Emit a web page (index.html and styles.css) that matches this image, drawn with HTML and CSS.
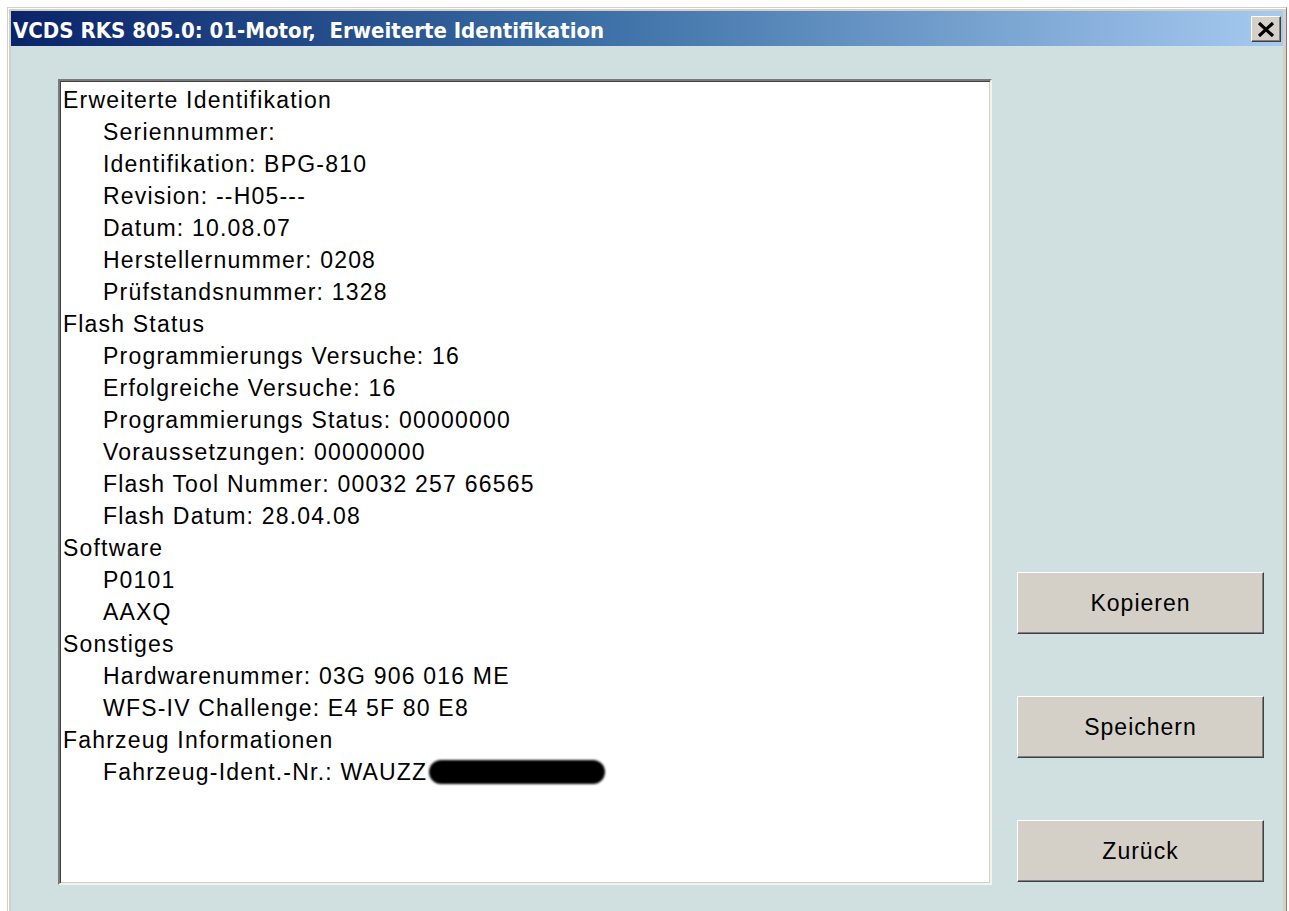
FILE: index.html
```html
<!DOCTYPE html>
<html lang="de">
<head>
<meta charset="utf-8">
<title>VCDS RKS 805.0: 01-Motor, Erweiterte Identifikation</title>
<link rel="stylesheet" href="styles.css">
</head>
<body>
<div class="window">
  <div class="titlebar">
    <span class="title">VCDS RKS 805.0: 01-Motor,&nbsp; Erweiterte Identifikation</span>
    <button class="close" type="button" aria-label="Schließen">
      <svg width="18" height="15" viewBox="0 0 18 15">
        <path d="M2 1 L16 14 M16 1 L2 14" stroke="#000" stroke-width="3.2" fill="none"/>
      </svg>
    </button>
  </div>
  <div class="client">
    <div class="listbox">
      <div class="group">Erweiterte Identifikation</div>
      <div class="item">Seriennummer:</div>
      <div class="item">Identifikation: BPG-810</div>
      <div class="item">Revision: --H05---</div>
      <div class="item">Datum: 10.08.07</div>
      <div class="item">Herstellernummer: 0208</div>
      <div class="item">Prüfstandsnummer: 1328</div>
      <div class="group">Flash Status</div>
      <div class="item">Programmierungs Versuche: 16</div>
      <div class="item">Erfolgreiche Versuche: 16</div>
      <div class="item">Programmierungs Status: 00000000</div>
      <div class="item">Voraussetzungen: 00000000</div>
      <div class="item">Flash Tool Nummer: 00032 257 66565</div>
      <div class="item">Flash Datum: 28.04.08</div>
      <div class="group">Software</div>
      <div class="item">P0101</div>
      <div class="item">AAXQ</div>
      <div class="group">Sonstiges</div>
      <div class="item">Hardwarenummer: 03G 906 016 ME</div>
      <div class="item">WFS-IV Challenge: E4 5F 80 E8</div>
      <div class="group">Fahrzeug Informationen</div>
      <div class="item">Fahrzeug-Ident.-Nr.: WAUZZ<span class="redacted"></span></div>
    </div>
    <div class="actions">
      <button class="btn" type="button">Kopieren</button>
      <button class="btn" type="button">Speichern</button>
      <button class="btn" type="button">Zurück</button>
    </div>
  </div>
</div>
</body>
</html>
```
FILE: styles.css
```css
html, body {
  margin: 0;
  padding: 0;
  background: #ffffff;
}

body {
  padding: 7px 0 0 7px;
  font-family: "Liberation Sans", Arial, sans-serif;
}

/* dialog frame */
.window {
  width: 1272px;
  height: 920px;
  border-top: 1px solid #d4d0c8;
  border-left: 1px solid #d4d0c8;
  border-right: 1px solid #808080;
  padding: 3px;
  background: #d4d0c8;
  box-shadow: inset 1px 1px 0 #ffffff;
  display: flex;
  flex-direction: column;
}

.titlebar {
  height: 35px;
  flex: none;
  box-sizing: border-box;
  display: flex;
  align-items: center;
  justify-content: space-between;
  padding: 1px 2px 0 2px;
  background: linear-gradient(to right, #0a246a 0%, #3a6ea5 45%, #a6caf0 100%);
}

.title {
  color: #ffffff;
  font-family: "DejaVu Sans Condensed", "DejaVu Sans", sans-serif;
  font-weight: bold;
  font-size: 22px;
  line-height: 26px;
  padding-top: 3px;
  white-space: nowrap;
}

.close {
  width: 30px;
  height: 26px;
  padding: 0;
  margin: 0;
  display: flex;
  align-items: center;
  justify-content: center;
  background: #d4d0c8;
  border: 1px solid;
  border-color: #ffffff #404040 #404040 #ffffff;
  box-shadow: inset -1px -1px 0 #808080;
}

.client {
  flex: 1;
  background: #d0dfe0;
  display: flex;
  align-items: flex-start;
  padding: 33px 19px 0 47px;
}

/* sunken list of identification values */
.listbox {
  width: 934px;
  height: 806px;
  flex: none;
  box-sizing: border-box;
  background: #ffffff;
  border: 2px solid;
  border-color: #7a7a7a #f4f2ee #f4f2ee #7a7a7a;
  box-shadow: inset 1px 1px 0 #404040, inset -1px -1px 0 #d4d0c8;
  padding: 3px 0 0 3px;
  font-size: 23px;
  line-height: 32px;
  color: #000000;
  letter-spacing: 1.2px;
}

.item {
  padding-left: 40px;
  white-space: nowrap;
}

.group {
  white-space: nowrap;
}

.redacted {
  display: inline-block;
  vertical-align: middle;
  width: 176px;
  height: 24px;
  margin-left: 2px;
  margin-top: -4px;
  background: #000000;
  border-radius: 12px;
  filter: blur(1px);
}

.actions {
  margin-left: 25px;
  width: 247px;
  height: 803px;
  display: flex;
  flex-direction: column;
  justify-content: flex-end;
  gap: 62px;
}

.btn {
  height: 62px;
  width: 100%;
  margin: 0;
  padding: 0;
  background: #d4d0c8;
  border: 1px solid;
  border-color: #ffffff #404040 #404040 #ffffff;
  box-shadow: inset -1px -1px 0 #808080;
  font-family: "Liberation Sans", Arial, sans-serif;
  font-size: 23px;
  letter-spacing: 1px;
  color: #000000;
}
```
